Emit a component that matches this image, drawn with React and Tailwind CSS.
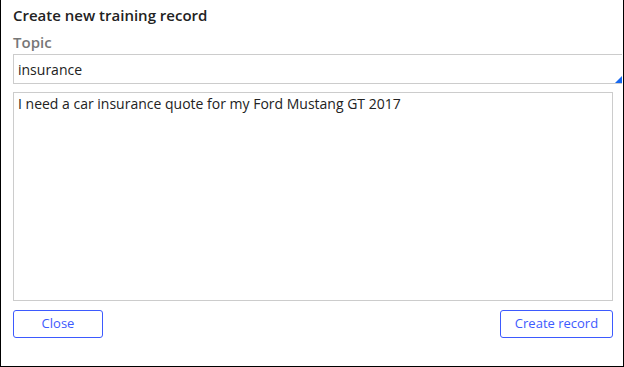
import React from "react";

const App = () => {
  return (
    <div
      className="w-[624px] h-[367px] bg-white border-x border-b border-black flex flex-col pl-3 pt-[4px]"
      style={{ fontFamily: '"Open Sans", "Noto Sans", sans-serif' }}
    >
      {/* Title */}
      <h2 className="text-[15px] leading-[22px] font-semibold text-[#222]">
        Create new training record
      </h2>

      {/* Topic */}
      <label className="mt-[7px] text-[15px] leading-[18px] font-semibold text-[#777]">
        Topic
      </label>
      <div className="relative mt-[3px] h-[30px] border-y border-l border-[#ccc] w-[609px] flex items-center px-[4px]">
        <span className="text-[14px] text-[#222]">insurance</span>
        <svg
          className="absolute right-0 bottom-0"
          width="7"
          height="7"
          viewBox="0 0 7 7"
        >
          <polygon points="7,0 7,7 0,7" fill="#1668f0" />
        </svg>
      </div>

      {/* Message */}
      <div className="mt-[8px] w-[600px] h-[209px] border border-[#ccc] px-[4px] py-[1px]">
        <p className="text-[14px] leading-[20px] text-[#222]">
          I need a car insurance quote for my Ford Mustang GT 2017
        </p>
      </div>

      {/* Actions */}
      <div className="mt-[9px] w-[600px] flex justify-between">
        <button className="w-[90px] h-[28px] border border-[#3d5afe] rounded-[3px] text-[13px] text-[#3d5afe]">
          Close
        </button>
        <button className="w-[113px] h-[28px] border border-[#3d5afe] rounded-[3px] text-[13px] text-[#3d5afe]">
          Create record
        </button>
      </div>
    </div>
  );
};

export default App;
